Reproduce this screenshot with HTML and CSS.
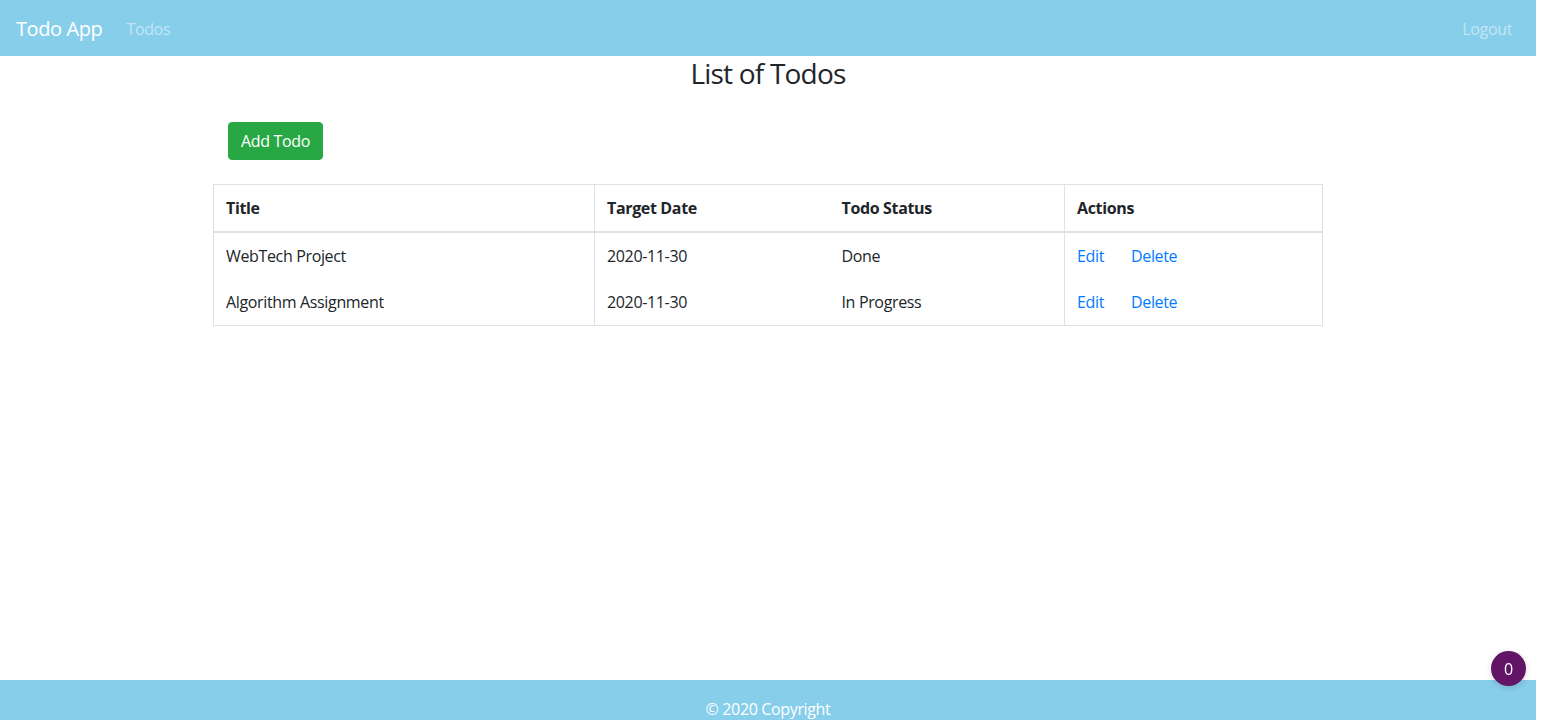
FILE: index.html
```html
<!DOCTYPE html>
<html lang="en">
<head>
<meta charset="utf-8">
<title>Todo App</title>
<link rel="stylesheet" href="styles.css">
</head>
<body>
<div class="page">
  <header class="navbar">
    <div class="nav-left">
      <a class="brand" href="#">Todo App</a>
      <a class="nav-link" href="#">Todos</a>
    </div>
    <a class="nav-link" href="#">Logout</a>
  </header>
  <main class="container">
    <h2 class="title">List of Todos</h2>
    <div class="toolbar">
      <button class="btn-success">Add Todo</button>
    </div>
    <table class="todos">
      <thead>
        <tr>
          <th class="c1 sep">Title</th>
          <th class="c2">Target Date</th>
          <th class="c3 sep">Todo Status</th>
          <th class="c4">Actions</th>
        </tr>
      </thead>
      <tbody>
        <tr>
          <td class="sep">WebTech Project</td>
          <td>2020-11-30</td>
          <td class="sep">Done</td>
          <td><a class="act" href="#">Edit</a><a class="act" href="#">Delete</a></td>
        </tr>
        <tr>
          <td class="sep">Algorithm Assignment</td>
          <td>2020-11-30</td>
          <td class="sep">In Progress</td>
          <td><a class="act" href="#">Edit</a><a class="act" href="#">Delete</a></td>
        </tr>
      </tbody>
    </table>
  </main>
  <footer class="footer">© 2020 Copyright</footer>
</div>
<div class="badge">0</div>
</body>
</html>
```
FILE: styles.css
```css
* { box-sizing: border-box; }
html, body { margin: 0; padding: 0; background: #fff; }
body {
  font-family: "Open Sans", "Noto Sans", sans-serif;
  font-size: 16px;
  line-height: 1.5;
  letter-spacing: -0.35px;
  color: #212529;
  overflow: hidden;
}
.page {
  width: 1536px;
  min-height: 720px;
  display: flex;
  flex-direction: column;
}
a { text-decoration: none; }
.navbar {
  height: 56px;
  background: #87ceeb;
  display: flex;
  align-items: center;
  justify-content: space-between;
  padding: 1px 16px 0;
}
.nav-left { display: flex; align-items: center; }
.brand {
  color: #fff;
  font-size: 20px;
  letter-spacing: -0.4px;
  margin-right: 16px;
}
.nav-link {
  color: rgba(255,255,255,.5);
  padding: 0 8px;
}
.container {
  flex: 1;
  width: 1140px;
  margin: 0 auto;
  padding: 0 15px;
}
.title {
  margin: 0;
  font-size: 28px;
  font-weight: 400;
  letter-spacing: -0.8px;
  line-height: 34px;
  text-align: center;
}
.toolbar { padding: 32px 15px 24px; }
.btn-success {
  font-family: inherit;
  font-size: 16px;
  letter-spacing: -0.35px;
  line-height: 24px;
  color: #fff;
  background: #28a745;
  border: 1px solid #28a745;
  border-radius: 4px;
  padding: 6px 12px;
}
.todos {
  width: 100%;
  border-collapse: collapse;
  border: 1px solid #dee2e6;
}
.todos th {
  text-align: left;
  font-weight: 700;
  padding: 11px 12px;
  border-bottom: 2px solid #dee2e6;
}
.todos td { padding: 11px 12px; }
.todos .sep { border-right: 1px solid #dee2e6; }
.c1 { width: 381px; }
.c2 { width: 235px; }
.c3 { width: 235px; }
.act { color: #007bff; margin-right: 27px; }
.footer {
  height: 40px;
  background: #87ceeb;
  color: #fff;
  text-align: center;
  padding-top: 17px;
  line-height: 24px;
  overflow: hidden;
}
.badge {
  position: fixed;
  right: 25px;
  bottom: 34px;
  width: 35px;
  height: 35px;
  border-radius: 50%;
  background: #621466;
  color: #fff;
  font-size: 16px;
  display: flex;
  align-items: center;
  justify-content: center;
  box-shadow: 0 2px 6px rgba(0,0,0,.15);
}
```
